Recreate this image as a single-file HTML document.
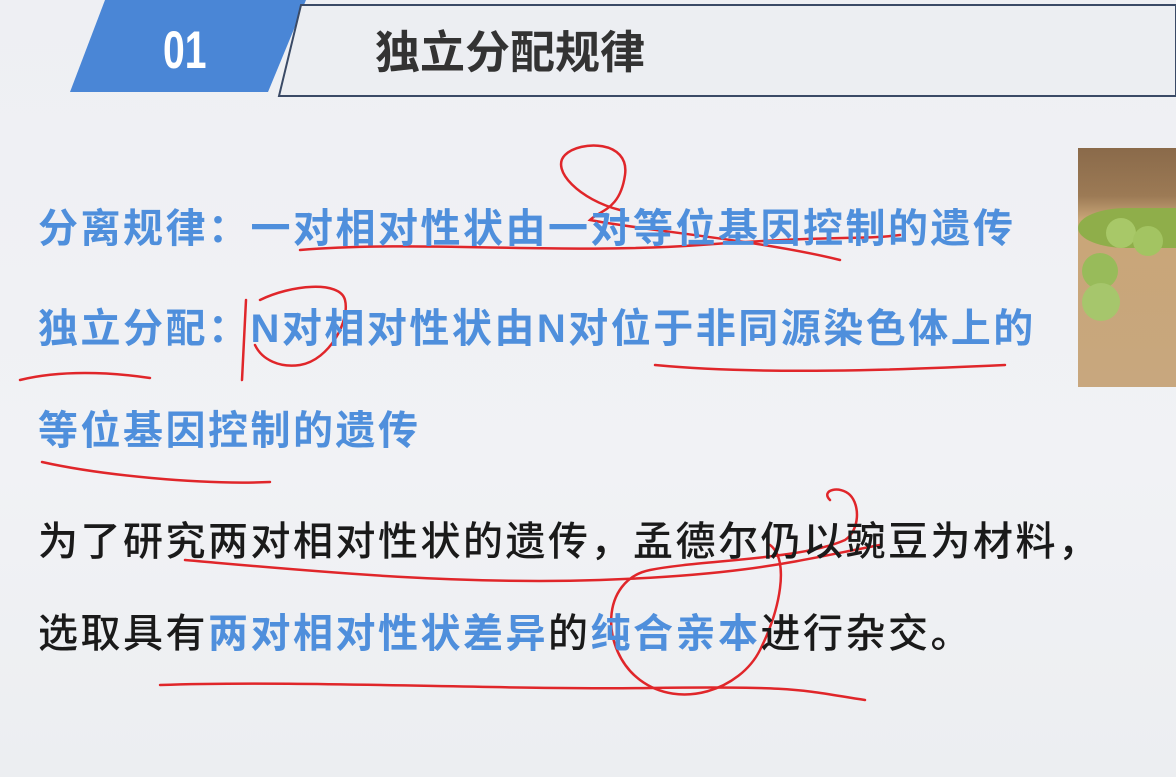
<!DOCTYPE html>
<html><head><meta charset="utf-8"><style>
html,body{margin:0;padding:0}
body{width:1176px;height:777px;overflow:hidden;background:linear-gradient(180deg,#eeeff3 0%,#f1f2f5 60%,#eceef1 100%);position:relative;font-family:"Liberation Sans","Noto Sans CJK SC",sans-serif}
.t{position:absolute;left:38px;font-size:40px;letter-spacing:2.5px;white-space:nowrap;line-height:1}
.b{color:#4f8fdc;font-weight:bold}
.k{color:#1a1a1a;font-weight:500}
</style></head><body>
<svg width="1176" height="777" style="position:absolute;left:0;top:0">
<polygon points="105,0 306,0 268,92 70,92" fill="#4a86d6"/>
<polygon points="301,5 1176,5 1176,96 279,96" fill="#eceef2" stroke="#3a4a66" stroke-width="2"/>
<text x="0" y="0" font-family="Liberation Sans" font-weight="bold" font-size="46" fill="#fff" transform="translate(163,68) scale(0.85,1.15)">01</text>
<text x="375" y="68" font-family="Liberation Sans, Noto Sans CJK SC, sans-serif" font-weight="bold" font-size="45" fill="#333">独立分配规律</text>
<g fill="none" stroke="#e0262a" stroke-width="2.5" stroke-linecap="round">
<path d="M300,250 C420,240 560,255 700,245 S860,240 900,235"/>
<path d="M620,210 C580,200 550,170 565,155 S630,140 625,175 S600,210 590,220 C640,230 760,240 840,260"/>
<path d="M20,380 C60,370 110,372 150,378"/>
<path d="M246,300 L242,380"/>
<path d="M260,300 C290,285 340,280 345,300 S330,360 300,365 C280,368 262,360 255,345"/>
<path d="M655,365 C760,375 900,370 1005,365"/>
<path d="M42,462 C100,475 200,485 270,482"/>
<path d="M185,560 C300,570 450,585 600,580 S800,560 880,545"/>
<path d="M830,500 C820,490 840,485 850,495 S860,530 845,540 C800,560 700,560 650,570 S600,650 640,680 S740,690 760,650 S790,560 770,545"/>
<path d="M160,685 C300,680 500,690 650,688 S800,690 865,700"/>
</g>
</svg>
<div style="position:absolute;left:1078px;top:148px;width:98px;height:239px;background:linear-gradient(180deg,#8a6a4a 0%,#9c7a55 20%,#c9a678 30%,#c8a77e 100%)">
<div style="position:absolute;left:0;top:60px;width:98px;height:40px;border-radius:50% 0 0 50%;background:#8fae4a"></div>
<div style="position:absolute;left:28px;top:70px;width:30px;height:30px;border-radius:50%;background:#a8c868"></div>
<div style="position:absolute;left:55px;top:78px;width:30px;height:30px;border-radius:50%;background:#a3c462"></div>
<div style="position:absolute;left:4px;top:105px;width:36px;height:36px;border-radius:50%;background:#98bb5a"></div>
<div style="position:absolute;left:4px;top:135px;width:38px;height:38px;border-radius:50%;background:#a6c66c"></div>
</div>
<div class="t b" style="top:209px">分离规律：一对相对性状由一对等位基因控制的遗传</div>
<div class="t b" style="top:309px">独立分配：N对相对性状由N对位于非同源染色体上的</div>
<div class="t b" style="top:411px">等位基因控制的遗传</div>
<div class="t k" style="top:522px">为了研究两对相对性状的遗传，孟德尔仍以豌豆为材料，</div>
<div class="t k" style="top:614px">选取具有<span class="b">两对相对性状差异</span>的<span class="b">纯合亲本</span>进行杂交。</div>
</body></html>
